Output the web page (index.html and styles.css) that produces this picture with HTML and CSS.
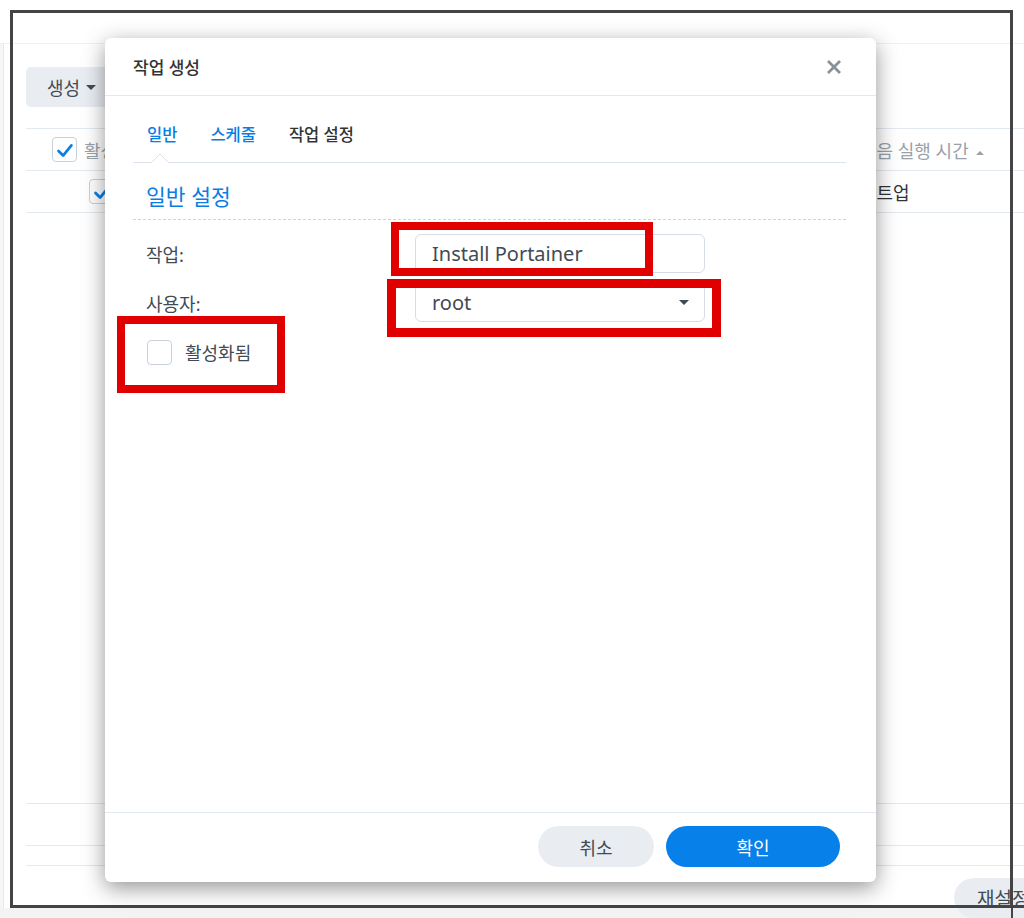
FILE: index.html
```html
<!DOCTYPE html>
<html lang="ko">
  <head>
    <meta charset="UTF-8" />
    <meta name="viewport" content="width=device-width, initial-scale=1.0" />
    <title>작업 생성</title>
    <link rel="stylesheet" href="styles.css">
  </head>
  <body>
    <div class="app">
      <div class="app-top"></div>
      <div class="app-main">
        <div class="app-side"></div>
        <div class="app-content">
          <div class="toolbar">
            <button class="btn-create">생성 <span class="caret-down"></span></button>
          </div>
          <div class="grid">
            <div class="grid-head">
              <span class="chk checked">
                <svg viewBox="0 0 25 25" width="25" height="25"><polyline points="6,13 11,18 20,7" /></svg>
              </span>
              <span class="col-name">활성화됨</span>
              <span class="col-next">다음 실행 시간 <span class="caret-up"></span></span>
            </div>
            <div class="grid-row">
              <span class="chk checked indent">
                <svg viewBox="0 0 25 25" width="25" height="25"><polyline points="6,13 11,18 20,7" /></svg>
              </span>
              <span class="col-name"></span>
              <span class="col-next dark">부트업</span>
            </div>
          </div>
          <div class="pager"></div>
          <div class="status"></div>
          <div class="foot-bar">
            <button class="btn-reset">재설정</button>
          </div>
        </div>
      </div>
    </div>

    <!-- annotation frame drawn over the screenshot -->
    <div class="frame"></div>

    <div class="dialog">
      <div class="dialog-head">
        <span class="dialog-title">작업 생성</span>
        <span class="dialog-close">
          <svg viewBox="0 0 16 16" width="16" height="16"><path d="M2 2 L14 14 M14 2 L2 14" /></svg>
        </span>
      </div>
      <div class="dialog-body">
        <div class="tabs">
          <span class="tab active">일반</span>
          <span class="tab active">스케줄</span>
          <span class="tab">작업 설정</span>
          <svg class="tab-notch" viewBox="0 0 18 9" width="18" height="9"><polyline points="0,9 9,0 18,9" /></svg>
        </div>
        <div class="section-title">일반 설정</div>
        <div class="form">
          <div class="form-row">
            <label class="form-label">작업:</label>
            <div class="field">Install Portainer</div>
          </div>
          <div class="form-row">
            <label class="form-label">사용자:</label>
            <div class="field select">root <span class="caret-down"></span></div>
          </div>
          <div class="check-row">
            <span class="chk"></span>
            <span>활성화됨</span>
          </div>
        </div>
      </div>
      <div class="dialog-foot">
        <button class="btn btn-cancel">취소</button>
        <button class="btn btn-ok">확인</button>
      </div>
    </div>

    <!-- red highlight boxes -->
    <div class="mark mark-task"></div>
    <div class="mark mark-user"></div>
    <div class="mark mark-enable"></div>
  </body>
</html>
```

FILE: styles.css
```css
* {
  box-sizing: border-box;
}
body {
  margin: 0;
  width: 1024px;
  height: 918px;
  overflow: hidden;
  position: relative;
  background-color: #f3f3f3;
  font-family: "Noto Sans", "Noto Sans CJK KR", sans-serif;
  color: #414b55;
}
button {
  font-family: inherit;
  border: none;
  cursor: pointer;
}

/* background app */
.app {
  height: 908px;
  background-color: #fff;
  display: flex;
  flex-direction: column;
}
.app-top {
  height: 44px;
  flex: none;
  border-bottom: 1px solid #eef1f4;
}
.app-main {
  flex: 1;
  display: flex;
}
.app-side {
  width: 4px;
  background-color: #f4f6f8;
  border-right: 1px solid #e3e8ee;
}
.app-content {
  flex: 1;
  display: flex;
  flex-direction: column;
  padding-left: 22px;
}
.toolbar {
  margin-top: 23px;
  display: flex;
}
.btn-create {
  height: 40px;
  width: 100px;
  padding: 0 0 0 21px;
  text-align: left;
  background-color: #e9edf2;
  border-radius: 5px;
  font-size: 18px;
  color: #414b55;
  display: flex;
  align-items: center;
  gap: 6px;
}
.caret-down {
  display: inline-block;
  width: 0;
  height: 0;
  border-left: 5px solid transparent;
  border-right: 5px solid transparent;
  border-top: 5px solid #414b55;
}
.caret-up {
  display: inline-block;
  width: 0;
  height: 0;
  margin-left: 3px;
  vertical-align: middle;
  border-left: 4px solid transparent;
  border-right: 4px solid transparent;
  border-bottom: 4px solid #9aa1a9;
}
.grid {
  margin-top: 21px;
  flex: 1;
  border-top: 1px solid #e3e9f0;
}
.grid-head,
.grid-row {
  height: 42px;
  display: flex;
  align-items: center;
  border-bottom: 1px solid #e3e9f0;
  font-size: 18px;
  color: #9aa1a9;
  padding-left: 26px;
}
.col-name {
  margin-left: 7px;
  width: 776px;
  white-space: nowrap;
}
.grid-row .col-name {
  margin-left: 12px;
  width: 734px;
}
.col-next {
  white-space: nowrap;
}
.col-next.dark {
  color: #333;
}
.chk {
  width: 25px;
  height: 25px;
  flex: none;
  border: 1px solid #c8d1db;
  border-radius: 4px;
  background-color: #fff;
  display: inline-flex;
}
.chk.indent {
  margin-left: 37px;
}
.chk svg polyline {
  fill: none;
  stroke: #0b7fe6;
  stroke-width: 3;
  stroke-linecap: round;
  stroke-linejoin: round;
}
.pager {
  height: 42px;
  flex: none;
  border-top: 1px solid #e3e9f0;
}
.status {
  height: 20px;
  flex: none;
  border-top: 1px solid #e3e9f0;
}
.foot-bar {
  height: 43px;
  flex: none;
  border-top: 1px solid #e3e9f0;
  display: flex;
  justify-content: flex-end;
  align-items: flex-start;
  padding-top: 12px;
  margin-right: -26px;
}
.btn-reset {
  height: 40px;
  width: 96px;
  flex: none;
  border-radius: 20px;
  padding-left: 23px;
  text-align: left;
  background-color: #e9edf2;
  font-size: 19px;
  color: #414b55;
  white-space: nowrap;
}

/* annotation frame */
.frame {
  position: absolute;
  left: 10px;
  top: 10px;
  width: 1003px;
  height: 898px;
  border: 3px solid #444;
}
.frame::after {
  content: "";
  position: absolute;
  left: 995px;
  top: 892px;
  width: 20px;
  height: 3px;
  background-color: #444;
}
.frame::before {
  content: "";
  position: absolute;
  left: 998px;
  top: 895px;
  width: 2px;
  height: 14px;
  background-color: #444;
}

/* dialog */
.dialog {
  position: absolute;
  left: 105px;
  top: 38px;
  width: 771px;
  height: 844px;
  background-color: #fff;
  border-radius: 6px;
  box-shadow: 0 6px 22px rgba(0, 0, 0, 0.42);
  display: flex;
  flex-direction: column;
}
.dialog-head {
  height: 58px;
  flex: none;
  display: flex;
  align-items: center;
  justify-content: space-between;
  padding: 0 34px 0 28px;
  border-bottom: 1px solid #e3e9f0;
}
.dialog-title {
  font-size: 17px;
  font-weight: 500;
  color: #333;
}
.dialog-close svg path {
  stroke: #8b9198;
  stroke-width: 2.8;
}
.dialog-close {
  display: flex;
}
.dialog-body {
  flex: 1;
  padding: 0 30px 0 28px;
}
.tabs {
  height: 67px;
  display: flex;
  align-items: flex-end;
  gap: 33px;
  padding: 0 0 16px 14px;
  border-bottom: 1px solid #dbe3ec;
  position: relative;
}
.tab {
  font-size: 16.5px;
  font-weight: 500;
  line-height: 22px;
  color: #333;
}
.tab.active {
  color: #0a7de2;
}
.tab-notch {
  position: absolute;
  left: 18px;
  bottom: -1px;
}
.tab-notch polyline {
  fill: #fff;
  stroke: #dbe3ec;
  stroke-width: 1;
}
.section-title {
  margin-top: 20px;
  padding: 0 0 8px 13px;
  font-size: 21.5px;
  line-height: 28px;
  color: #0a7de2;
  border-bottom: 1px dashed #c9d5e2;
}
.form {
  padding: 14px 0 0 13px;
}
.form-row {
  display: flex;
  align-items: center;
  margin-bottom: 10px;
}
.form-label {
  width: 269px;
  font-size: 18px;
}
.field {
  width: 290px;
  height: 39px;
  border: 1px solid #d6dde6;
  border-radius: 6px;
  padding: 0 16px;
  display: flex;
  align-items: center;
  font-size: 20px;
  color: #414b55;
}
.field.select {
  justify-content: space-between;
  padding-right: 15px;
}
.check-row {
  margin-top: 17px;
  display: flex;
  align-items: center;
  gap: 13px;
  font-size: 18px;
}
.check-row .chk {
  margin-left: 1px;
}
.dialog-foot {
  height: 70px;
  flex: none;
  border-top: 1px solid #e3e9f0;
  display: flex;
  justify-content: flex-end;
  gap: 12px;
  padding: 13px 36px 0 0;
}
.btn {
  height: 41px;
  border-radius: 21px;
  font-size: 18px;
}
.btn-cancel {
  width: 116px;
  background-color: #e9edf2;
  color: #414b55;
}
.btn-ok {
  width: 174px;
  background-color: #0880ea;
  color: #fff;
}

/* red highlight boxes */
.mark {
  position: absolute;
  border: 8px solid #e00000;
}
.mark-task {
  left: 391px;
  top: 222px;
  width: 262px;
  height: 54px;
}
.mark-user {
  left: 387px;
  top: 279px;
  width: 334px;
  height: 58px;
  border-width: 9px;
}
.mark-enable {
  left: 117px;
  top: 316px;
  width: 168px;
  height: 77px;
}
```
